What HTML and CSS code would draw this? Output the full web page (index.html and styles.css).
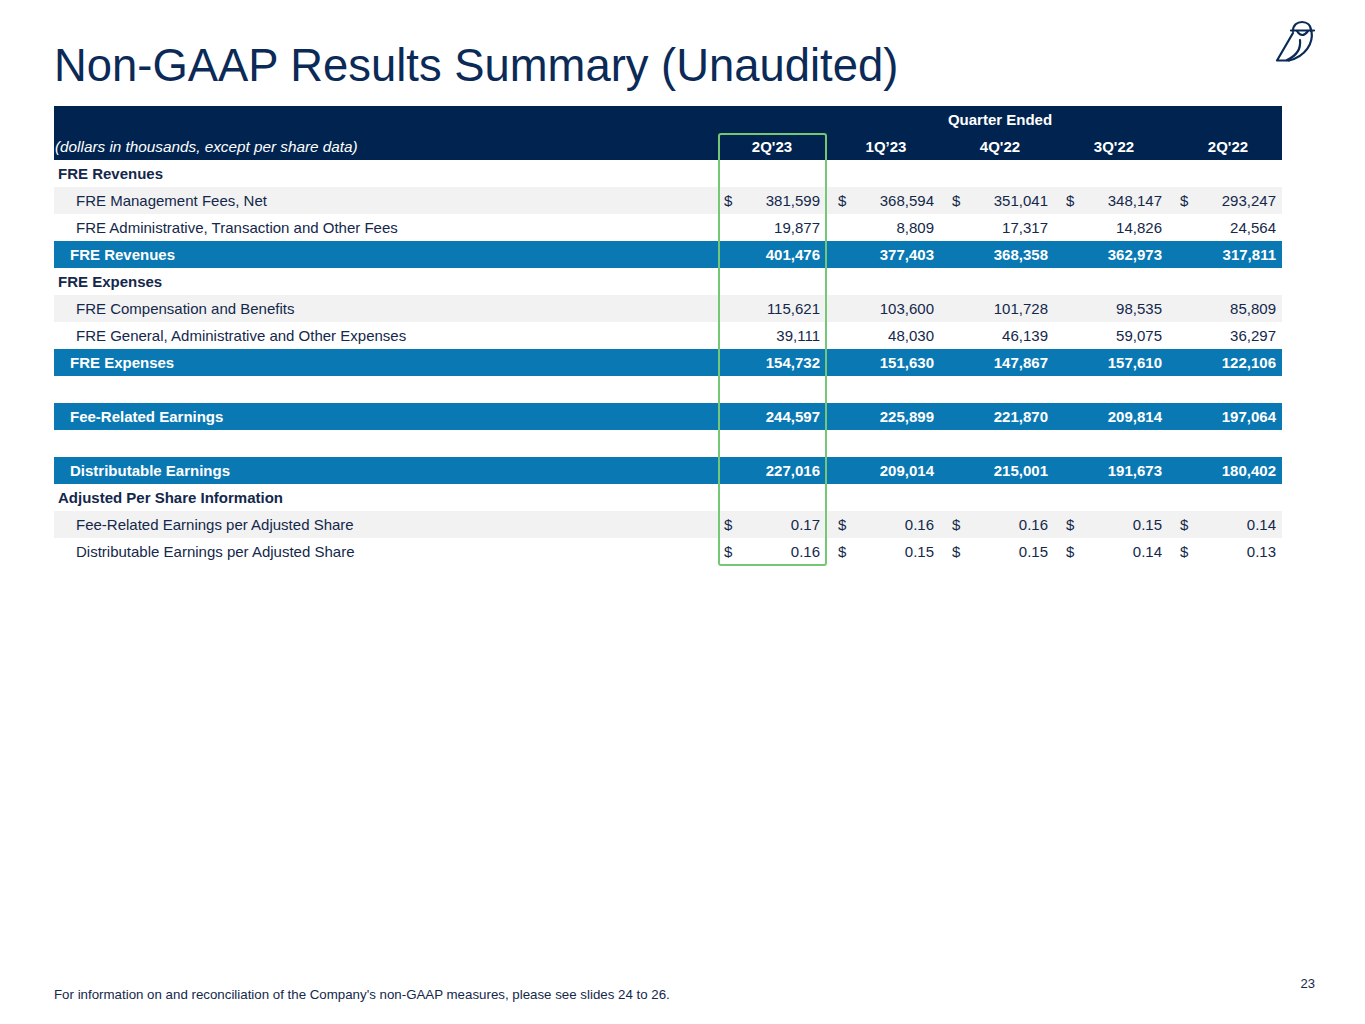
FILE: index.html
```html
<!DOCTYPE html>
<html lang="en">
<head>
<meta charset="utf-8">
<title>Non-GAAP Results Summary (Unaudited)</title>
<link rel="stylesheet" href="styles.css">
</head>
<body>
<div class="page">
  <header class="top">
    <h1 class="title">Non-GAAP Results Summary (Unaudited)</h1>
    <svg class="logo" viewBox="0 0 44 48" width="44" height="48" aria-hidden="true">
      <g fill="none" stroke="#0c2a55" stroke-width="2.2" stroke-linecap="round" stroke-linejoin="round">
        <path d="M21,12 C21,6 25,3 30,3 C35,3 39,6 39,12"/>
        <path d="M19,11.5 L42,11.5"/>
        <path d="M25,12 Q30,20 36,12"/>
        <path d="M21,14 L5,41.5 L17,41.5"/>
        <path d="M39.5,12 C41.5,24 34,37 17,41.5"/>
        <path d="M28,21 C29,30 24,37 15,41"/>
      </g>
    </svg>
  </header>

  <section class="table">
    <div class="row head head1">
      <div class="lbl"></div>
      <div class="span">Quarter Ended</div>
    </div>
    <div class="row head head2">
      <div class="lbl it">(dollars in thousands, except per share data)</div>
      <div class="q">2Q'23</div>
      <div class="q">1Q’23</div>
      <div class="q">4Q'22</div>
      <div class="q">3Q'22</div>
      <div class="q">2Q'22</div>
    </div>

    <div class="row sec"><div class="lbl">FRE Revenues</div></div>
    <div class="row sub shade">
      <div class="lbl">FRE Management Fees, Net</div>
      <div class="v"><span>$</span><span>381,599</span></div>
      <div class="v"><span>$</span><span>368,594</span></div>
      <div class="v"><span>$</span><span>351,041</span></div>
      <div class="v"><span>$</span><span>348,147</span></div>
      <div class="v"><span>$</span><span>293,247</span></div>
    </div>
    <div class="row sub">
      <div class="lbl">FRE Administrative, Transaction and Other Fees</div>
      <div class="v"><span></span><span>19,877</span></div>
      <div class="v"><span></span><span>8,809</span></div>
      <div class="v"><span></span><span>17,317</span></div>
      <div class="v"><span></span><span>14,826</span></div>
      <div class="v"><span></span><span>24,564</span></div>
    </div>
    <div class="row total">
      <div class="lbl">FRE Revenues</div>
      <div class="v"><span></span><span>401,476</span></div>
      <div class="v"><span></span><span>377,403</span></div>
      <div class="v"><span></span><span>368,358</span></div>
      <div class="v"><span></span><span>362,973</span></div>
      <div class="v"><span></span><span>317,811</span></div>
    </div>

    <div class="row sec"><div class="lbl">FRE Expenses</div></div>
    <div class="row sub shade">
      <div class="lbl">FRE Compensation and Benefits</div>
      <div class="v"><span></span><span>115,621</span></div>
      <div class="v"><span></span><span>103,600</span></div>
      <div class="v"><span></span><span>101,728</span></div>
      <div class="v"><span></span><span>98,535</span></div>
      <div class="v"><span></span><span>85,809</span></div>
    </div>
    <div class="row sub">
      <div class="lbl">FRE General, Administrative and Other Expenses</div>
      <div class="v"><span></span><span>39,111</span></div>
      <div class="v"><span></span><span>48,030</span></div>
      <div class="v"><span></span><span>46,139</span></div>
      <div class="v"><span></span><span>59,075</span></div>
      <div class="v"><span></span><span>36,297</span></div>
    </div>
    <div class="row total">
      <div class="lbl">FRE Expenses</div>
      <div class="v"><span></span><span>154,732</span></div>
      <div class="v"><span></span><span>151,630</span></div>
      <div class="v"><span></span><span>147,867</span></div>
      <div class="v"><span></span><span>157,610</span></div>
      <div class="v"><span></span><span>122,106</span></div>
    </div>

    <div class="row blank"></div>
    <div class="row total">
      <div class="lbl">Fee-Related Earnings</div>
      <div class="v"><span></span><span>244,597</span></div>
      <div class="v"><span></span><span>225,899</span></div>
      <div class="v"><span></span><span>221,870</span></div>
      <div class="v"><span></span><span>209,814</span></div>
      <div class="v"><span></span><span>197,064</span></div>
    </div>

    <div class="row blank"></div>
    <div class="row total">
      <div class="lbl">Distributable Earnings</div>
      <div class="v"><span></span><span>227,016</span></div>
      <div class="v"><span></span><span>209,014</span></div>
      <div class="v"><span></span><span>215,001</span></div>
      <div class="v"><span></span><span>191,673</span></div>
      <div class="v"><span></span><span>180,402</span></div>
    </div>

    <div class="row sec"><div class="lbl">Adjusted Per Share Information</div></div>
    <div class="row sub shade">
      <div class="lbl">Fee-Related Earnings per Adjusted Share</div>
      <div class="v"><span>$</span><span>0.17</span></div>
      <div class="v"><span>$</span><span>0.16</span></div>
      <div class="v"><span>$</span><span>0.16</span></div>
      <div class="v"><span>$</span><span>0.15</span></div>
      <div class="v"><span>$</span><span>0.14</span></div>
    </div>
    <div class="row sub">
      <div class="lbl">Distributable Earnings per Adjusted Share</div>
      <div class="v"><span>$</span><span>0.16</span></div>
      <div class="v"><span>$</span><span>0.15</span></div>
      <div class="v"><span>$</span><span>0.15</span></div>
      <div class="v"><span>$</span><span>0.14</span></div>
      <div class="v"><span>$</span><span>0.13</span></div>
    </div>

    <div class="highlight" aria-hidden="true"></div>
  </section>

  <footer class="foot">
    <div class="pagenum">23</div>
    <div class="note">For information on and reconciliation of the Company's non-GAAP measures, please see slides 24 to 26.</div>
  </footer>
</div>
</body>
</html>
```

FILE: styles.css
```css
* { box-sizing: border-box; }

html, body {
  margin: 0;
  padding: 0;
  background: #ffffff;
}

body {
  font-family: "Liberation Sans", Arial, sans-serif;
  color: #14284b;
}

.page {
  width: 1365px;
  height: 1024px;
  display: flex;
  flex-direction: column;
  overflow: hidden;
}

.top {
  display: flex;
  justify-content: space-between;
  align-items: flex-start;
  padding: 40px 49px 0 54px;
}

.title {
  margin: 0;
  font-weight: normal;
  font-size: 45.4px;
  line-height: 52px;
  color: #0b2a57;
  letter-spacing: 0;
}

.logo {
  display: block;
  margin-top: -21px;
}

.table {
  position: relative;
  margin: 14px 0 0 54px;
  width: 1228px;
  font-size: 15px;
}

.row {
  display: grid;
  grid-template-columns: 658px repeat(5, 108px);
  column-gap: 6px;
  height: 27px;
  line-height: 27px;
  white-space: nowrap;
}

.head {
  background: #00244f;
  color: #ffffff;
  font-weight: bold;
}

.head1 .span {
  grid-column: 2 / 7;
  text-align: center;
}

.head2 .lbl.it {
  font-style: italic;
  font-weight: normal;
  font-size: 15.3px;
  padding-left: 1px;
}

.q {
  text-align: center;
}

.sec .lbl {
  font-weight: bold;
  padding-left: 4px;
}

.sub .lbl {
  padding-left: 22px;
}

.shade {
  background: #f2f2f2;
}

.total {
  background: #0a79b3;
  color: #ffffff;
  font-weight: bold;
}

.total .lbl {
  padding-left: 16px;
}

.v {
  display: flex;
  justify-content: space-between;
  padding: 0 6px;
}

.highlight {
  position: absolute;
  left: 664px;
  top: 27px;
  width: 109px;
  height: 433px;
  border: 2px solid #74c774;
  border-radius: 3px;
  pointer-events: none;
}

.foot {
  margin-top: auto;
  padding: 0 50px 22px 54px;
  font-size: 13.3px;
  line-height: 15px;
}

.pagenum {
  text-align: right;
  font-size: 13px;
  margin-bottom: -4px;
}

.note {
  color: #14284b;
}
```
